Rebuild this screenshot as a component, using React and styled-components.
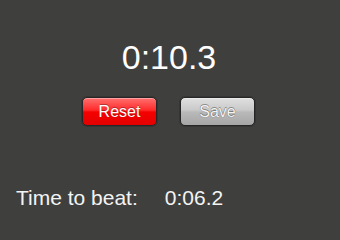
import React from 'react'
import styled, { createGlobalStyle } from 'styled-components'

const Global = createGlobalStyle`
  html, body {
    margin: 0;
    padding: 0;
    background: #3f403e;
  }
  body {
    font-family: "Liberation Sans", Arial, sans-serif;
  }
`

const Screen = styled.div`
  width: 340px;
  height: 227px;
  background: #3f403e;
  display: flex;
  flex-direction: column;
  overflow: hidden;
`

const Clock = styled.div`
  margin-top: 40px;
  height: 34px;
  font-size: 34px;
  line-height: 34px;
  color: #ffffff;
  text-align: center;
  padding-right: 2px;
`

const Buttons = styled.div`
  margin-top: 23px;
  display: flex;
  justify-content: center;
  gap: 23px;
  padding-right: 3px;
`

const Button = styled.button`
  width: 75px;
  height: 29px;
  padding: 0;
  border: 1px solid #262626;
  border-radius: 5px;
  font-family: "Liberation Sans", Arial, sans-serif;
  font-size: 16px;
  color: ${p => (p.$tone === 'red' ? '#ffffff' : '#f4f4f4')};
  text-shadow: ${p =>
    p.$tone === 'red' ? '0 -1px 0 rgba(0, 0, 0, 0.3)' : '0 0 1px rgba(0, 0, 0, 0.55), 0 -1px 0 rgba(0, 0, 0, 0.3)'};
  background: ${p =>
    p.$tone === 'red'
      ? 'linear-gradient(#ff7070 0%, #ff2a2a 45%, #f40000 52%, #e40000 100%)'
      : 'linear-gradient(#e0e0e0 0%, #c9c9c9 45%, #b9b9b9 52%, #a6a6a6 100%)'};
  box-shadow: inset 0 1px 0 rgba(255, 255, 255, 0.35), 0 0 0 1px rgba(0, 0, 0, 0.15);
`

const BestRow = styled.div`
  margin-top: 61px;
  display: flex;
  gap: 27px;
  padding-left: 16px;
  font-size: 21px;
  line-height: 21px;
  color: #f4f4f4;
`

export default function App() {
  return (
    <Screen>
      <Global />
      <Clock>0:10.3</Clock>
      <Buttons>
        <Button $tone="red">Reset</Button>
        <Button $tone="gray">Save</Button>
      </Buttons>
      <BestRow>
        <span>Time to beat:</span>
        <span>0:06.2</span>
      </BestRow>
    </Screen>
  )
}
